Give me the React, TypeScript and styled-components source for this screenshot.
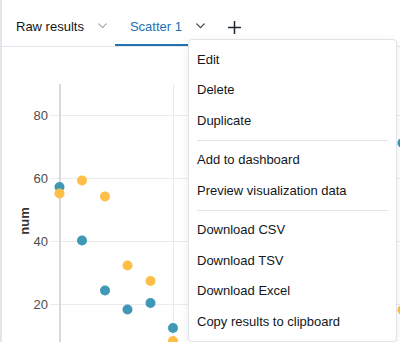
import styled, { createGlobalStyle } from 'styled-components'

const GlobalStyle = createGlobalStyle`
  html, body {
    margin: 0;
    padding: 0;
    background: #ffffff;
  }
  body {
    font-family: 'Liberation Sans', Arial, sans-serif;
    color: #11171c;
  }
`

const TEAL = '#3f98b5'
const YELLOW = '#fdbf47'

const TICKS = [
  { label: '80', y: 115.5 },
  { label: '60', y: 178.5 },
  { label: '40', y: 241.5 },
  { label: '20', y: 304.5 },
]

const TEAL_POINTS = [
  [59.5, 187],
  [82, 240.5],
  [105, 290.5],
  [127.5, 309.5],
  [150.5, 303],
  [173, 328],
  [402.5, 143],
]

const YELLOW_POINTS = [
  [59.5, 193.5],
  [82, 180.5],
  [105, 196.5],
  [127.5, 265.5],
  [150.5, 281],
  [173, 341],
  [263, 342],
  [402.5, 310],
]

const MENU = [
  ['Edit', 'Delete', 'Duplicate'],
  ['Add to dashboard', 'Preview visualization data'],
  ['Download CSV', 'Download TSV', 'Download Excel', 'Copy results to clipboard'],
]

const Frame = styled.div`
  position: relative;
  width: 398px;
  height: 342px;
  border-left: 2px solid #dfe6ec;
  overflow: hidden;
  display: flex;
  flex-direction: column;
`

const TabBar = styled.div`
  display: flex;
  align-items: stretch;
  height: 38px;
  padding-top: 8px;
  border-bottom: 1px solid #e4e8ec;
`

const Tab = styled.div<{ $active?: boolean }>`
  display: flex;
  align-items: center;
  padding: 0 8px 0 ${(p) => (p.$active ? 15 : 14)}px;
  font-size: 13px;
  color: ${(p) => (p.$active ? '#2272b4' : '#11171c')};
  border-bottom: 2px solid ${(p) => (p.$active ? '#2272b4' : 'transparent')};
  box-sizing: border-box;
  height: 38px;
`

const TabChevron = styled.svg<{ $active?: boolean }>`
  margin-left: 14px;
  color: ${(p) => (p.$active ? '#3c444c' : '#a3abb3')};
`

const AddButton = styled.div`
  display: flex;
  align-items: center;
  margin-left: 15px;
  color: #1f272d;
`

const ChartArea = styled.div`
  flex: 1;
`

const Menu = styled.div`
  position: absolute;
  left: 186px;
  top: 39px;
  width: 207px;
  padding: 4px 0;
  background: #ffffff;
  border: 1px solid #dfe4e9;
  border-radius: 4px;
  box-shadow: 0 2px 8px rgba(0, 0, 0, 0.08);
`

const MenuItem = styled.div`
  height: 30.5px;
  display: flex;
  align-items: center;
  padding: 0 8px;
  font-size: 13px;
  color: #11171c;
`

const MenuDivider = styled.div`
  height: 1px;
  margin: 4px 8px;
  background: #dfe4e9;
`

function Chevron({ active }: { active?: boolean }) {
  return (
    <TabChevron $active={active} width="9" height="6" viewBox="0 0 9 6">
      <path d="M0.75 0.9 L4.5 4.6 L8.25 0.9" fill="none" stroke="currentColor" strokeWidth="1.3" strokeLinecap="round" strokeLinejoin="round" />
    </TabChevron>
  )
}

function Chart() {
  return (
    <svg width="398" height="295" viewBox="2 47 398 295">
      {TICKS.map((t) => (
        <g key={t.label}>
          <line x1="50" x2="400" y1={t.y} y2={t.y} stroke="#ebebeb" strokeWidth="1" />
          <text x="48" y={t.y + 4.5} textAnchor="end" fontSize="13" fill="#4d4d4d" fontFamily="'Liberation Sans', Arial, sans-serif">
            {t.label}
          </text>
        </g>
      ))}
      <line x1="173.5" x2="173.5" y1="84" y2="342" stroke="#ebebeb" strokeWidth="1" />
      <line x1="60" x2="60" y1="84" y2="342" stroke="#cccccc" strokeWidth="1.5" />
      <text
        x="28.5"
        y="221"
        transform="rotate(-90 28.5 221)"
        textAnchor="middle"
        fontSize="13"
        fontWeight="bold"
        fill="#333333"
        fontFamily="'Liberation Sans', Arial, sans-serif"
      >
        num
      </text>
      {TEAL_POINTS.map(([x, y], i) => (
        <circle key={`t${i}`} cx={x} cy={y} r="5" fill={TEAL} />
      ))}
      {YELLOW_POINTS.map(([x, y], i) => (
        <circle key={`y${i}`} cx={x} cy={y} r="5" fill={YELLOW} />
      ))}
    </svg>
  )
}

export default function App() {
  return (
    <>
      <GlobalStyle />
      <Frame>
        <TabBar>
          <Tab>
            Raw results
            <Chevron />
          </Tab>
          <Tab $active>
            Scatter 1
            <Chevron active />
          </Tab>
          <AddButton>
            <svg width="13" height="13" viewBox="0 0 13 13">
              <path d="M6.5 0.5 V12.5 M0.5 6.5 H12.5" stroke="currentColor" strokeWidth="1.5" strokeLinecap="round" />
            </svg>
          </AddButton>
        </TabBar>
        <ChartArea>
          <Chart />
        </ChartArea>
        <Menu>
          {MENU.map((group, gi) => (
            <div key={gi}>
              {gi > 0 && <MenuDivider />}
              {group.map((label) => (
                <MenuItem key={label}>{label}</MenuItem>
              ))}
            </div>
          ))}
        </Menu>
      </Frame>
    </>
  )
}
